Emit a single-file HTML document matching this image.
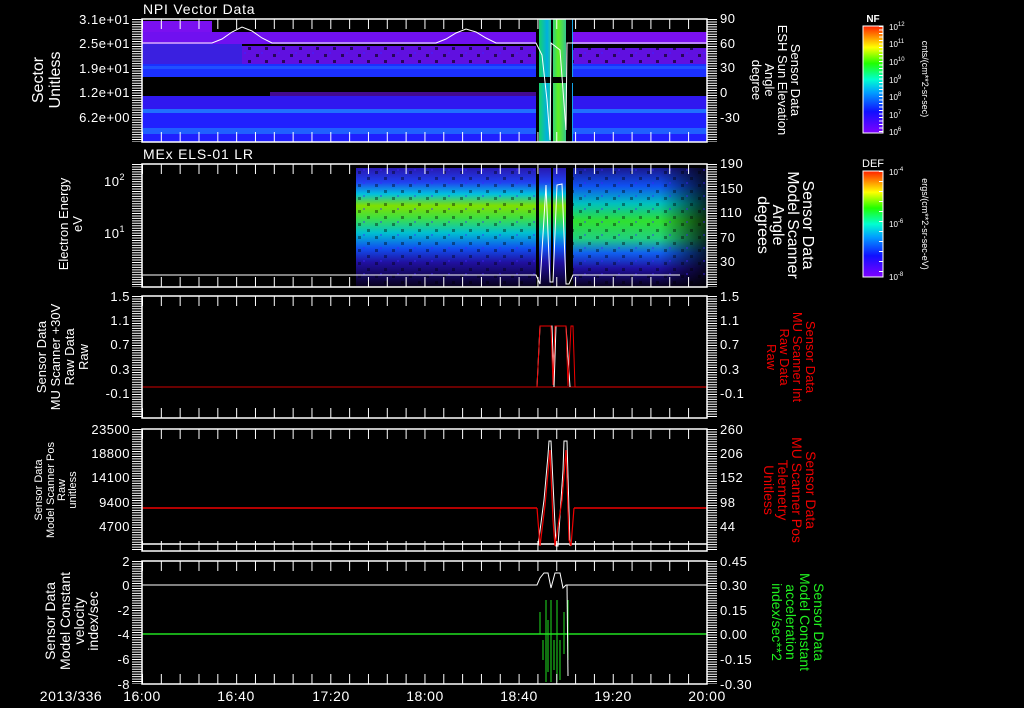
<!DOCTYPE html>
<html><head><meta charset="utf-8"><style>
html,body{margin:0;padding:0;background:#000;width:1024px;height:708px;overflow:hidden}
svg{display:block}
text{font-family:"Liberation Sans",sans-serif;fill:#fff}
</style></head><body>
<svg width="1024" height="708" viewBox="0 0 1024 708" xmlns="http://www.w3.org/2000/svg">
<defs>
<linearGradient id="rb" x1="0" y1="1" x2="0" y2="0">
<stop offset="0" stop-color="#8000ff"/><stop offset="0.2" stop-color="#1010ff"/><stop offset="0.38" stop-color="#00a0ff"/><stop offset="0.5" stop-color="#00ffd0"/><stop offset="0.65" stop-color="#20ff00"/><stop offset="0.8" stop-color="#ffff00"/><stop offset="0.9" stop-color="#ff9000"/><stop offset="1" stop-color="#ff2000"/>
</linearGradient>
<linearGradient id="els" x1="0" y1="0" x2="0" y2="1">
<stop offset="0" stop-color="#2818b0"/><stop offset="0.12" stop-color="#2040f0"/><stop offset="0.22" stop-color="#00c0e0"/><stop offset="0.32" stop-color="#80e000"/><stop offset="0.42" stop-color="#40e040"/><stop offset="0.55" stop-color="#00c0d0"/><stop offset="0.68" stop-color="#1050f0"/><stop offset="0.8" stop-color="#2010a0"/><stop offset="1" stop-color="#080020"/>
</linearGradient>
<linearGradient id="els2" x1="0" y1="0" x2="0" y2="1">
<stop offset="0" stop-color="#1a1890"/><stop offset="0.15" stop-color="#1050f0"/><stop offset="0.3" stop-color="#00c0c0"/><stop offset="0.45" stop-color="#30e030"/><stop offset="0.6" stop-color="#20d080"/><stop offset="0.72" stop-color="#1060f0"/><stop offset="0.85" stop-color="#2010a0"/><stop offset="1" stop-color="#080020"/>
</linearGradient>
<linearGradient id="fadeR" x1="0" y1="0" x2="1" y2="0">
<stop offset="0" stop-color="#000" stop-opacity="0"/><stop offset="1" stop-color="#000" stop-opacity="0.8"/>
</linearGradient>
<linearGradient id="burst" x1="0" y1="0" x2="1" y2="0">
<stop offset="0" stop-color="#20e040"/><stop offset="0.3" stop-color="#00b0e0"/><stop offset="0.6" stop-color="#60f020"/><stop offset="1" stop-color="#10a0f0"/>
</linearGradient>
<pattern id="spk" width="17" height="13" patternUnits="userSpaceOnUse">
<rect x="1" y="2" width="3" height="3" fill="#000"/><rect x="10" y="8" width="3" height="3" fill="#000"/><rect x="6" y="0" width="2" height="2" fill="#4020ff"/>
</pattern>
</defs>

<!-- PANEL 1 data -->
<g>
<rect x="142" y="21" width="70" height="11" fill="#7a10f0"/>
<rect x="142" y="32" width="394" height="12" fill="#7010f0"/>
<rect x="573" y="32" width="134" height="12" fill="#7a10f0"/>
<rect x="142" y="44" width="100" height="20" fill="#3a20e0"/>
<rect x="242" y="46" width="294" height="18" fill="#6010e0"/>
<rect x="242" y="46" width="294" height="18" fill="url(#spk)" opacity="0.6"/>
<rect x="573" y="48" width="134" height="16" fill="#6010e0"/>
<rect x="573" y="48" width="134" height="16" fill="url(#spk)" opacity="0.6"/>
<rect x="142" y="64" width="565" height="13" fill="#1a30ff"/>
<rect x="142" y="66" width="565" height="3" fill="#2050ff"/>
<rect x="142" y="96" width="565" height="46" fill="#2020ff"/>
<rect x="142" y="96" width="565" height="14" fill="#3018f0"/>
<rect x="142" y="109" width="565" height="4" fill="#2070ff"/>
<rect x="142" y="128" width="565" height="6" fill="#2060ff"/>
<rect x="270" y="92" width="266" height="4" fill="#7010f0" opacity="0.6"/>
<rect x="536" y="19" width="37" height="123" fill="url(#burst)"/>
<rect x="536" y="19" width="3" height="123" fill="#000"/>
<rect x="551" y="19" width="2" height="123" fill="#000"/>
<rect x="566" y="19" width="6" height="123" fill="#000"/>
<rect x="536" y="77" width="37" height="6" fill="#000"/>
<polyline fill="none" stroke="#fff" stroke-width="1" points="142,43 212,43 222,39 232,32 242,27 252,31 262,38 272,43 436,43 446,39 456,33 466,29 476,32 486,38 496,43 536,43 542,55 547,100 550,140 551,43 560,50 566,130 567,43 707,43"/>
</g>

<!-- PANEL 2 data -->
<rect x="356" y="168" width="180" height="118" fill="url(#els)"/>
<rect x="356" y="168" width="180" height="118" fill="url(#spk)" opacity="0.4"/>
<rect x="573" y="168" width="134" height="118" fill="url(#els2)"/>
<rect x="660" y="168" width="47" height="118" fill="url(#fadeR)"/>
<rect x="573" y="168" width="134" height="118" fill="url(#spk)" opacity="0.4"/>
<rect x="539" y="168" width="12" height="118" fill="url(#els)"/>
<rect x="553" y="168" width="13" height="118" fill="url(#els)"/>
<polyline fill="none" stroke="#fff" stroke-width="1" points="142,275 536,275 540,284 546,185 550,282 553,282 557,185 562,184 566,284 569,284 573,275 680,275"/>

<!-- PANEL 3 data -->
<line x1="142" y1="387" x2="707" y2="387" stroke="#d00000"/>
<polyline fill="none" stroke="#fff" points="537,387 540,326 552,326 554,387 556,326 566,326 570,387"/>
<polyline fill="none" stroke="#f00000" points="537,387 540,326 551,326 553,385 555,326 566,326 568,386 571,326 573,326 575,387 707,387"/>

<!-- PANEL 4 data -->
<line x1="142" y1="508" x2="537" y2="508" stroke="#f00000" stroke-width="1.5"/>
<line x1="574" y1="508" x2="707" y2="508" stroke="#f00000" stroke-width="1.5"/>
<line x1="142" y1="544" x2="707" y2="544" stroke="#fff" stroke-width="1.5"/>
<polyline fill="none" stroke="#fff" points="538,546 544,500 548,455 549,441 551,441 556,546 558,546 563,470 564,441 567,441 570,546"/>
<polyline fill="none" stroke="#f00000" stroke-width="1.2" points="537,508 540,546 545,505 550,450 553,520 555,546 562,500 566,450 569,540 571,546 574,508"/>

<!-- PANEL 5 data -->
<polyline fill="none" stroke="#fff" points="142,585 537,585 540,578 544,573 548,573 551,588 555,573 560,573 563,588 566,585 707,585"/>
<line x1="142" y1="634" x2="707" y2="634" stroke="#20e020" stroke-width="1.5"/>
<g stroke="#20e020" stroke-width="1">
<line x1="540" y1="634" x2="540" y2="612"/><line x1="543" y1="640" x2="543" y2="660"/><line x1="546" y1="600" x2="546" y2="682"/><line x1="548" y1="620" x2="548" y2="672"/><line x1="551" y1="600" x2="551" y2="682"/><line x1="554" y1="640" x2="554" y2="670"/><line x1="557" y1="600" x2="557" y2="682"/><line x1="560" y1="640" x2="560" y2="680"/><line x1="564" y1="612" x2="564" y2="654"/><line x1="568" y1="600" x2="568" y2="660"/>
</g>
<line x1="567" y1="585" x2="568" y2="676" stroke="#fff"/>

<!-- FRAMES & TICKS -->
<g fill="none" stroke="#fff" stroke-width="1.5">
<rect x="142" y="19" width="565" height="123"/>
<rect x="142" y="164" width="565" height="123"/>
<rect x="142" y="296" width="565" height="122"/>
<rect x="142" y="429" width="565" height="122"/>
<rect x="142" y="561" width="565" height="123"/>
</g>
<g stroke="#fff" stroke-width="1">
<g stroke-dasharray="1 17.83">
<line x1="142" y1="137" x2="707" y2="137" stroke-width="10"/>
<line x1="142" y1="24" x2="707" y2="24" stroke-width="10"/>
<line x1="142" y1="282" x2="707" y2="282" stroke-width="10"/>
<line x1="142" y1="169" x2="707" y2="169" stroke-width="10"/>
<line x1="142" y1="413" x2="707" y2="413" stroke-width="10"/>
<line x1="142" y1="301" x2="707" y2="301" stroke-width="10"/>
<line x1="142" y1="546" x2="707" y2="546" stroke-width="10"/>
<line x1="142" y1="434" x2="707" y2="434" stroke-width="10"/>
<line x1="142" y1="679" x2="707" y2="679" stroke-width="10"/>
<line x1="142" y1="566" x2="707" y2="566" stroke-width="10"/>
</g>
<g stroke-dasharray="1 1.45">
<line x1="137" y1="19" x2="137" y2="142" stroke-width="10"/><line x1="712" y1="19" x2="712" y2="142" stroke-width="10"/>
<line x1="137" y1="164" x2="137" y2="287" stroke-width="10"/><line x1="712" y1="164" x2="712" y2="287" stroke-width="10"/>
<line x1="137" y1="296" x2="137" y2="418" stroke-width="10"/><line x1="712" y1="296" x2="712" y2="418" stroke-width="10"/>
<line x1="137" y1="429" x2="137" y2="551" stroke-width="10"/><line x1="712" y1="429" x2="712" y2="551" stroke-width="10"/>
<line x1="137" y1="561" x2="137" y2="684" stroke-width="10"/><line x1="712" y1="561" x2="712" y2="684" stroke-width="10"/>
</g>
</g>

<!-- TITLES -->
<text x="143" y="14" font-size="14" letter-spacing="0.8">NPI Vector Data</text>
<text x="143" y="159" font-size="14" letter-spacing="0.8">MEx ELS-01 LR</text>

<!-- LEFT TICK LABELS -->
<g font-size="13" text-anchor="end" letter-spacing="0.5">
<text x="130" y="24">3.1e+01</text><text x="130" y="48">2.5e+01</text><text x="130" y="73">1.9e+01</text><text x="130" y="97">1.2e+01</text><text x="130" y="122">6.2e+00</text>
<text x="125" y="186">10<tspan dy="-6" font-size="9">2</tspan></text><text x="125" y="238">10<tspan dy="-6" font-size="9">1</tspan></text>
<text x="130" y="301">1.5</text><text x="130" y="325">1.1</text><text x="130" y="349">0.7</text><text x="130" y="374">0.3</text><text x="130" y="398">-0.1</text>
<text x="130" y="434">23500</text><text x="130" y="458">18800</text><text x="130" y="482">14100</text><text x="130" y="507">9400</text><text x="130" y="531">4700</text>
<text x="130" y="566">2</text><text x="130" y="590">0</text><text x="130" y="615">-2</text><text x="130" y="639">-4</text><text x="130" y="664">-6</text><text x="130" y="689">-8</text>
</g>
<!-- RIGHT TICK LABELS -->
<g font-size="13" letter-spacing="0.5">
<text x="720" y="23">90</text><text x="720" y="48">60</text><text x="720" y="72">30</text><text x="720" y="97">0</text><text x="720" y="122">-30</text>
<text x="720" y="168">190</text><text x="720" y="193">150</text><text x="720" y="217">110</text><text x="720" y="242">70</text><text x="720" y="266">30</text>
<text x="720" y="301">1.5</text><text x="720" y="325">1.1</text><text x="720" y="349">0.7</text><text x="720" y="374">0.3</text><text x="720" y="398">-0.1</text>
<text x="720" y="434">260</text><text x="720" y="458">206</text><text x="720" y="482">152</text><text x="720" y="507">98</text><text x="720" y="531">44</text>
<text x="720" y="566">0.45</text><text x="720" y="590">0.30</text><text x="720" y="615">0.15</text><text x="720" y="639">0.00</text><text x="720" y="664">-0.15</text><text x="720" y="689">-0.30</text>
</g>
<!-- TIME LABELS -->
<g font-size="14" text-anchor="middle" letter-spacing="0.5">
<text x="71" y="701">2013/336</text><text x="142" y="701">16:00</text><text x="236" y="701">16:40</text><text x="331" y="701">17:20</text><text x="425" y="701">18:00</text><text x="519" y="701">18:40</text><text x="613" y="701">19:20</text><text x="707" y="701">20:00</text>
</g>

<!-- LEFT AXIS TITLES -->
<g text-anchor="middle">
<text transform="translate(43,80) rotate(-90)" font-size="16">Sector</text>
<text transform="translate(60,80) rotate(-90)" font-size="16">Unitless</text>
<text transform="translate(68,224) rotate(-90)" font-size="13">Electron Energy</text>
<text transform="translate(82,224) rotate(-90)" font-size="13">eV</text>
<text transform="translate(46,357) rotate(-90)" font-size="13">Sensor Data</text>
<text transform="translate(60,357) rotate(-90)" font-size="13">MU Scanner +30V</text>
<text transform="translate(74,357) rotate(-90)" font-size="13">Raw Data</text>
<text transform="translate(88,357) rotate(-90)" font-size="13">Raw</text>
<text transform="translate(42,490) rotate(-90)" font-size="11">Sensor Data</text>
<text transform="translate(54,490) rotate(-90)" font-size="11">Model Scanner Pos</text>
<text transform="translate(65,490) rotate(-90)" font-size="11">Raw</text>
<text transform="translate(76,490) rotate(-90)" font-size="11">unitless</text>
<text transform="translate(55,621) rotate(-90)" font-size="14">Sensor Data</text>
<text transform="translate(70,621) rotate(-90)" font-size="14">Model Constant</text>
<text transform="translate(84,621) rotate(-90)" font-size="14">velocity</text>
<text transform="translate(98,621) rotate(-90)" font-size="14">index/sec</text>
</g>
<!-- RIGHT AXIS TITLES -->
<g text-anchor="middle">
<text transform="translate(791,80) rotate(90)" font-size="13">Sensor Data</text>
<text transform="translate(778,80) rotate(90)" font-size="13">ESH Sun Elevation</text>
<text transform="translate(765,80) rotate(90)" font-size="13">Angle</text>
<text transform="translate(752,80) rotate(90)" font-size="13">degree</text>
<text transform="translate(803,225) rotate(90)" font-size="16">Sensor Data</text>
<text transform="translate(788,225) rotate(90)" font-size="16">Model Scanner</text>
<text transform="translate(773,225) rotate(90)" font-size="16">Angle</text>
<text transform="translate(758,225) rotate(90)" font-size="16">degrees</text>
<text transform="translate(806,357) rotate(90)" font-size="13" style="fill:#f00000">Sensor Data</text>
<text transform="translate(793,357) rotate(90)" font-size="13" style="fill:#f00000">MU Scanner Int</text>
<text transform="translate(780,357) rotate(90)" font-size="13" style="fill:#f00000">Raw Data</text>
<text transform="translate(767,357) rotate(90)" font-size="13" style="fill:#f00000">Raw</text>
<text transform="translate(806,490) rotate(90)" font-size="14" style="fill:#f00000">Sensor Data</text>
<text transform="translate(792,490) rotate(90)" font-size="14" style="fill:#f00000">MU Scanner Pos</text>
<text transform="translate(778,490) rotate(90)" font-size="14" style="fill:#f00000">Telemetry</text>
<text transform="translate(764,490) rotate(90)" font-size="14" style="fill:#f00000">Unitless</text>
<text transform="translate(814,622) rotate(90)" font-size="14" style="fill:#20f020">Sensor Data</text>
<text transform="translate(800,622) rotate(90)" font-size="14" style="fill:#20f020">Model Constant</text>
<text transform="translate(786,622) rotate(90)" font-size="14" style="fill:#20f020">acceleration</text>
<text transform="translate(772,622) rotate(90)" font-size="14" style="fill:#20f020">index/sec**2</text>
</g>

<!-- COLOR BARS -->
<rect x="863" y="26" width="20" height="107" fill="url(#rb)" stroke="#fff" stroke-width="1"/>
<rect x="863" y="171" width="20" height="106" fill="url(#rb)" stroke="#fff" stroke-width="1"/>
<line x1="881" y1="26" x2="881" y2="133" stroke="#fff" stroke-width="4" stroke-dasharray="1 2.5"/>
<line x1="881" y1="171" x2="881" y2="277" stroke="#fff" stroke-width="4" stroke-dasharray="1 9"/>
<text x="873" y="22" font-size="10" text-anchor="middle" font-weight="bold">NF</text>
<text x="873" y="167" font-size="11" text-anchor="middle">DEF</text>
<g font-size="8">
<text x="889" y="30">10<tspan dy="-4" font-size="6">12</tspan></text>
<text x="889" y="47">10<tspan dy="-4" font-size="6">11</tspan></text>
<text x="889" y="65">10<tspan dy="-4" font-size="6">10</tspan></text>
<text x="889" y="83">10<tspan dy="-4" font-size="6">9</tspan></text>
<text x="889" y="100">10<tspan dy="-4" font-size="6">8</tspan></text>
<text x="889" y="118">10<tspan dy="-4" font-size="6">7</tspan></text>
<text x="889" y="135">10<tspan dy="-4" font-size="6">6</tspan></text>
<text x="889" y="175">10<tspan dy="-4" font-size="6">-4</tspan></text>
<text x="889" y="227">10<tspan dy="-4" font-size="6">-6</tspan></text>
<text x="889" y="280">10<tspan dy="-4" font-size="6">-8</tspan></text>
</g>
<text transform="translate(922,79) rotate(90)" font-size="9" text-anchor="middle">cnts/(cm**2-sr-sec)</text>
<text transform="translate(922,224) rotate(90)" font-size="9" text-anchor="middle">ergs/(cm**2-sr-sec-eV)</text>
</svg>
</body></html>
